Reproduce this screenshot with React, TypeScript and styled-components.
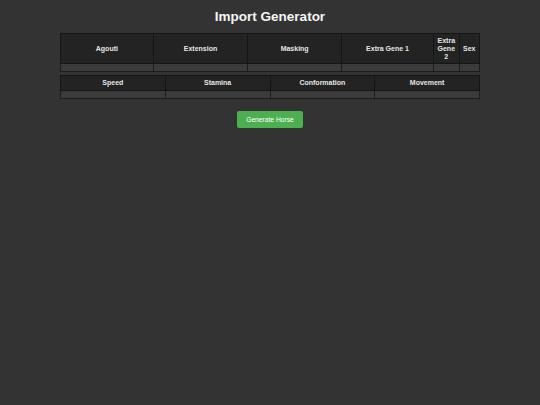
import React from 'react';
import styled, { createGlobalStyle } from 'styled-components';

const GlobalStyle = createGlobalStyle`
    html, body {
        margin: 0;
        padding: 0;
        background-color: #333333;
        font-family: "Liberation Sans", Arial, sans-serif;
        color: #f0f0f0;
    }
`;

const Page = styled.div`
    display: flex;
    flex-direction: column;
    align-items: center;
    padding-top: 9px;
    min-height: 405px;
    box-sizing: border-box;
`;

const Title = styled.h1`
    font-size: 13.5px;
    font-weight: bold;
    margin: 0 0 9px 0;
    color: #f5f5f5;
`;

const Table = styled.table`
    width: 420px;
    border-collapse: collapse;
    border: 1px solid #1a1a1a;
    margin-bottom: 3px;
`;

const HeadCell = styled.th<{ wide?: boolean }>`
    width: ${props => (props.wide ? '25%' : 'auto')};
    background-color: #232323;
    border: 1px solid #151515;
    font-size: 7px;
    font-weight: bold;
    color: #e6e6e6;
    padding: 3px 3.5px;
    line-height: 7.8px;
    text-align: center;
`;

const DataCell = styled.td`
    background-color: #3b3b3b;
    border: 1px solid #1c1c1c;
    padding: 3.5px 4px;
    line-height: 0;
`;

const GenerateButton = styled.button`
    margin-top: 9px;
    background-color: #4caf50;
    color: #ffffff;
    border: none;
    border-radius: 2px;
    font-family: "Liberation Sans", Arial, sans-serif;
    font-size: 6.7px;
    padding: 4.5px 9px;
    line-height: 8px;
    cursor: pointer;
`;

const genes = [
    { name: 'Agouti', wide: true },
    { name: 'Extension', wide: true },
    { name: 'Masking', wide: true },
    { name: 'Extra Gene 1', wide: true },
    { name: 'Extra Gene 2', wide: false },
    { name: 'Sex', wide: false },
];
const stats = ['Speed', 'Stamina', 'Conformation', 'Movement'];

const App = () => (
    <>
        <GlobalStyle />
        <Page>
            <Title>Import Generator</Title>
            <Table>
                <thead>
                    <tr>
                        {genes.map(g => (
                            <HeadCell key={g.name} wide={g.wide}>
                                {g.name}
                            </HeadCell>
                        ))}
                    </tr>
                </thead>
                <tbody>
                    <tr>
                        {genes.map(g => (
                            <DataCell key={g.name} />
                        ))}
                    </tr>
                </tbody>
            </Table>
            <Table>
                <thead>
                    <tr>
                        {stats.map(s => (
                            <HeadCell key={s} wide>
                                {s}
                            </HeadCell>
                        ))}
                    </tr>
                </thead>
                <tbody>
                    <tr>
                        {stats.map(s => (
                            <DataCell key={s} />
                        ))}
                    </tr>
                </tbody>
            </Table>
            <GenerateButton>Generate Horse</GenerateButton>
        </Page>
    </>
);

export default App;
